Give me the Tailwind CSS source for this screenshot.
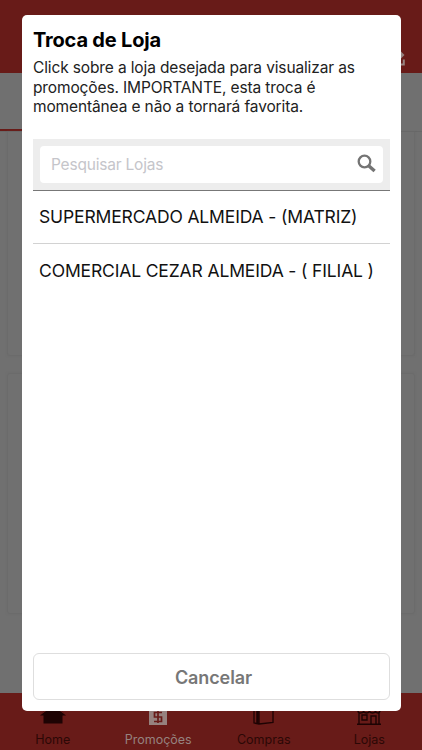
<!DOCTYPE html>
<html lang="pt-BR">
<head>
  <meta charset="UTF-8" />
  <meta name="viewport" content="width=device-width, initial-scale=1" />
  <title>Troca de Loja</title>
  <script src="https://cdn.jsdelivr.net/npm/@tailwindcss/browser@4"></script>
</head>
<body class="relative h-[750px] w-[422px] overflow-hidden bg-[#707070] font-['Inter','Liberation_Sans',sans-serif] text-black">
  <!-- App screen, dimmed -->
  <div class="flex h-full flex-col">
    <header class="flex h-[73px] shrink-0 items-end justify-end bg-[#681b18] pr-[17px] pb-[7px]">
      <svg class="h-[17px] w-[17px]" viewBox="0 0 17 17" fill="none" stroke="#96827f" stroke-width="2"><path d="M3 8v7.500h12.800V10.500"/><path d="M8 11V6h5"/><path d="M11.500 1l5 5-5 5z" fill="#96827f" stroke="none"/></svg>
    </header>
    <div class="flex h-[59px] shrink-0 items-end border-b border-[#686868]">
      <div class="h-[2px] w-[140px] bg-[#681b18]"></div>
    </div>
    <main class="flex flex-1 flex-col gap-[17px] px-[7px]">
      <div class="h-[224px] rounded-b-[3px] border border-t-0 border-[#6b6b6b] shadow-[0_0_2px_#6a6a6a]"></div>
      <div class="h-[241px] rounded-[3px] border border-[#6b6b6b] shadow-[0_0_2px_#6a6a6a]"></div>
    </main>
    <nav class="flex h-[57px] shrink-0 bg-[#681b18] text-[12.5px] leading-[16px] text-[#2b0806]">
      <div class="flex w-[105.5px] flex-col items-center pt-[8px]">
        <svg class="h-[24px] w-[26px]" viewBox="0 0 26 24" fill="#1d0303"><path d="M13 1L26 14.5H22.5V22.5H3.5V14.5H0z"/><path d="M0.5 13.5L13 4.5L25.5 13.5" fill="none" stroke="#681b18"/></svg>
        <span class="mt-[7px]">Home</span>
      </div>
      <div class="flex w-[105.5px] flex-col items-center pt-[8px] text-[#96827f]">
        <svg class="h-[24px] w-[18px]" viewBox="0 0 18 24"><path d="M0 3h18v21H0z" fill="#96827f"/><path d="M13 11.5H5.5V16H12.5V20.5H5M9 9v13" fill="none" stroke="#681b18" stroke-width="1.7"/></svg>
        <span class="mt-[7px]">Promoções</span>
      </div>
      <div class="flex w-[105.5px] flex-col items-center pt-[8px]">
        <svg class="h-[24px] w-[21px]" viewBox="0 0 21 24" fill="none" stroke="#1d0303" stroke-width="1.3"><path d="M1 5V22L6 23L20 21.5V5M6 5V23"/><path d="M4.5 5V22.5" stroke-width="2.5"/></svg>
        <span class="mt-[7px]">Compras</span>
      </div>
      <div class="flex w-[105.5px] flex-col items-center pt-[8px]">
        <svg class="h-[24px] w-[24px]" viewBox="0 0 24 24" fill="none" stroke="#1d0303" stroke-width="1.4"><path d="M0 23.3H24M2 11V23M22 11V23M1 8v2q0 2 2.5 2t3-1.5q1 1.5 3 1.5t3-1.5q1 1.5 3 1.5t3-1.5q1 1.5 2.5 1.5t2-2V8M5 14h5v5H5zM14 23v-8h5v8"/></svg>
        <span class="mt-[7px]">Lojas</span>
      </div>
    </nav>
  </div>

  <!-- Store picker -->
  <section class="absolute top-[15px] left-[22px] flex h-[696px] w-[379px] flex-col rounded-[5px] bg-white px-[11px] pt-[11px] pb-[11px]">
    <h1 class="text-[20px] leading-[28px] font-bold tracking-[-0.18px]">Troca de Loja</h1>
    <p class="mt-[4px] text-[15.5px] leading-[19.5px] tracking-[-0.13px] whitespace-nowrap text-[#222]">Click sobre a loja desejada para visualizar as<br>promoções. IMPORTANTE, esta troca é<br>momentânea e não a tornará favorita.</p>
    <div class="mt-[22px] h-[52px] shrink-0 border-b border-[#777] bg-[#ededed] px-[7px] pt-[7px]">
      <label class="flex h-[37px] items-center rounded-[4px] bg-white pr-[7px] pl-[11px]">
        <input type="text" placeholder="Pesquisar Lojas" class="min-w-0 flex-1 pt-[1px] text-[15.5px] tracking-[-0.2px] outline-none placeholder:text-[#c5c5ca]" />
        <svg class="mb-[2px] h-[19px] w-[19px]" viewBox="0 0 19 19" fill="none" stroke="#747474"><circle cx="7.5" cy="7.5" r="5.8" stroke-width="2.3"/><path d="M11.7 11.7L17.6 17" stroke-width="3.4"/></svg>
      </label>
    </div>
    <ul class="text-[17.5px] tracking-[-0.14px] whitespace-nowrap text-[#111]">
      <li class="flex h-[53px] items-center border-b border-[#d2d2d2] pt-[2px] pl-[6px]"><span>SUPERMERCADO ALMEIDA - (MATRIZ)</span></li>
      <li class="flex h-[53px] items-center pt-[2px] pl-[6px]"><span>COMERCIAL CEZAR ALMEIDA - ( FILIAL )</span></li>
    </ul>
    <button class="mt-auto h-[47px] w-[357px] rounded-[6px] border border-[#dedede] pt-[1px] pl-[4px] text-[18px] font-semibold tracking-[-0.1px] text-[#777]">Cancelar</button>
  </section>
</body>
</html>
